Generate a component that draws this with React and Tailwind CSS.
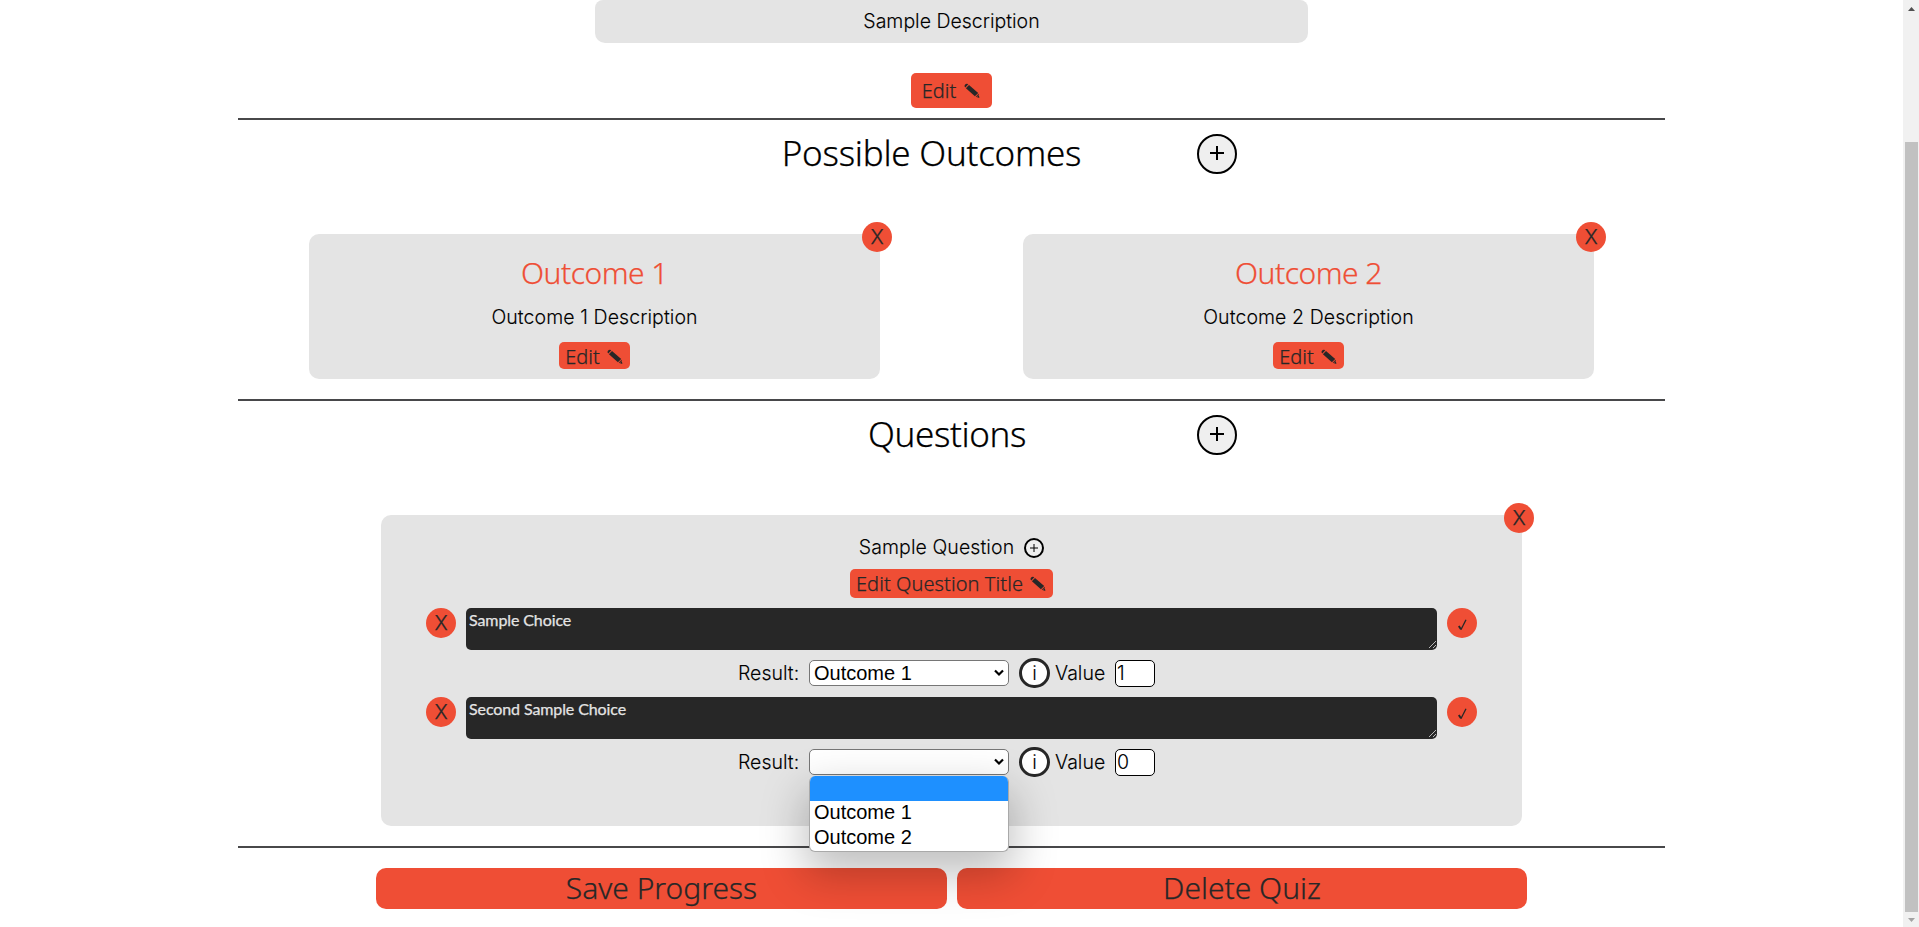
const SANS = "font-['Noto_Sans','Open_Sans',sans-serif] font-light [-webkit-text-stroke:0.25px]";
const BODY = "font-['Inter',sans-serif] font-light text-[19.5px] [-webkit-text-stroke:0.1px]";

function Pencil() {
  return (
    <svg width="16" height="16" viewBox="0 0 16 16" fill="#272727" className="shrink-0">
      <path d="M0.6 3.4C0.2 2 1.6 0.4 3.1 0.7L4.3 1.3L1.3 4.6Z" />
      <path d="M5 1.9L14.2 9.9L10.9 13.2L1.9 5.2Z" />
      <path d="M14.6 10.7L15.4 15L11.7 13.8Z" />
      <path d="M14.3 12.4L13 13.7" stroke="#ef4e35" strokeWidth="0.8" />
    </svg>
  );
}

function Rule() {
  return <div className="mx-auto h-0.5 w-[1427px] bg-[#48484a]" />;
}

function Round({ children, className = "" }) {
  return (
    <button className={`flex h-[30px] w-[30px] shrink-0 items-center justify-center rounded-full bg-[#ef4e35] font-['Inter',sans-serif] font-light leading-none text-[#272727] ${className}`}>
      {children}
    </button>
  );
}

function Heading({ children, box }) {
  return (
    <div className="flex h-[68px] pt-3.5">
      <h2 className={`h-10 pt-px text-center leading-9 whitespace-nowrap ${box}`}>{children}</h2>
      <button className="flex h-10 w-10 items-center justify-center rounded-full border-2 border-black bg-[#efefef]">
        <svg width="16" height="16" viewBox="0 0 16 16" className="mb-0.5">
          <path d="M8 1V15M1 8H15" stroke="black" strokeWidth="2" />
        </svg>
      </button>
    </div>
  );
}

function Outcome({ n }) {
  return (
    <div className="relative flex h-[145px] w-[571px] flex-col items-center rounded-[10px] bg-[#e4e4e4]">
      <Round className="absolute -top-3 -right-3 text-[20px]">X</Round>
      <h3 className="mt-[21px] h-9 text-[30px] leading-9 tracking-[-0.5px] text-[#ef4e35]">Outcome {n}</h3>
      <p className={`mt-3 h-[28px] leading-7 tracking-[0.08px] ${BODY}`}>Outcome {n} Description</p>
      <button className="mt-[11px] flex h-[27px] w-[71px] items-center justify-center gap-[7px] rounded-[5px] bg-[#ef4e35] pt-0.5 pr-px text-[20px] leading-6 text-[#272727]">
        Edit <Pencil />
      </button>
    </div>
  );
}

function Choice({ text, result, value, open }) {
  return (
    <div className="h-[89px]">
      <div className="flex justify-center gap-2.5">
        <Round className="text-[20px]">X</Round>
        <div className="flex h-[42px] w-[971px] items-end justify-between rounded-[5px] bg-[#272727]">
          <span className="self-start pt-[3px] pl-[3px] font-['Lato',sans-serif] text-[16px] leading-[18px] font-normal tracking-[-0.1px] text-[#e4e4e4]">{text}</span>
          <svg width="9" height="9" viewBox="0 0 9 9" className="mb-px">
            <path d="M1 8L8 1M5 8L8 5" stroke="#c8c8c8" strokeWidth="0.9" />
          </svg>
        </div>
        <Round>
          <svg width="9" height="12" viewBox="0 0 9 12" fill="none" stroke="#272727" className="mt-[3px]">
            <path d="M0.8 7L2.9 10.3" strokeWidth="1.9" />
            <path d="M2.9 10.8L8 0.8" strokeWidth="1.3" />
          </svg>
        </Round>
      </div>
      <div className={`mt-2 flex h-[30px] items-center pl-[357px] leading-7 ${BODY}`}>
        <span className="w-[71px]">Result:</span>
        <div className="relative flex h-[26px] w-[200px] items-center justify-between rounded-[5px] border border-[#767676] bg-white pr-1 pl-1 font-['Liberation_Sans',sans-serif] text-[20px] font-normal [-webkit-text-stroke:0px]">
          <span className="leading-6">{result}</span>
          <svg width="10" height="8" viewBox="0 0 10 8" fill="none" className="ml-auto">
            <path d="M1 1.5L5 5.5L9 1.5" stroke="black" strokeWidth="2.2" />
          </svg>
          {open && (
            <div className="absolute top-[26px] -left-px z-10 flex h-[76px] w-[200px] flex-col overflow-hidden rounded-[6px] border border-t-0 border-[#a9a9a9] bg-white shadow-[0_18px_44px_4px_rgba(0,0,0,0.25)]">
              <div className="h-[25px] bg-[#1e90ff]" />
              <div className="h-[25px] pl-1 leading-[22px]">Outcome 1</div>
              <div className="h-[25px] pl-1 leading-[22px]">Outcome 2</div>
            </div>
          )}
        </div>
        <span className="ml-2.5 flex h-[30px] w-[31px] items-center justify-center rounded-full border-3 border-[#272727] bg-white leading-6">i</span>
        <span className="ml-[5px] w-[60px]">Value</span>
        <span className="flex h-[27px] w-10 items-center rounded-[5px] border border-black bg-white pl-px leading-6">{value}</span>
      </div>
    </div>
  );
}

export default function App() {
  return (
    <div className={`flex h-[927px] w-[1919px] overflow-hidden bg-white text-black ${SANS}`}>
      <main className="w-[1903px]">
        <div className={`mx-auto flex h-[43px] w-[713px] justify-center rounded-[10px] rounded-t-[8px] bg-[#e4e4e4] pt-[7px] leading-7 ${BODY}`}>Sample Description</div>
        <button className="mx-auto mt-[30px] mb-2.5 flex h-[35px] w-[81px] items-center justify-center gap-2 rounded-[5px] bg-[#ef4e35] pr-px text-[20px] text-[#272727]">
          Edit <Pencil />
        </button>
        <Rule />
        <Heading box="ml-[781px] mr-[115px] w-[301px] text-[35px] tracking-[-0.25px]">Possible Outcomes</Heading>
        <section className="mt-[46px] flex gap-[143px] pl-[309px]">
          <Outcome n={1} />
          <Outcome n={2} />
        </section>
        <div className="h-5" />
        <Rule />
        <Heading box="ml-[867px] mr-[170px] w-[160px] text-[35px] tracking-[-0.4px]">Questions</Heading>
        <section className="relative mx-auto mt-[46px] h-[311px] w-[1141px] rounded-[10px] bg-[#e4e4e4] pt-[18px]">
          <Round className="absolute -top-3 -right-3 text-[20px]">X</Round>
          <div className={`flex h-7 items-center justify-center gap-[10px] leading-7 tracking-[0.08px] ${BODY}`}>
            Sample Question
            <span className="mt-0.5 flex h-5 w-5 items-center justify-center rounded-full border-2 border-black bg-[#efefef]">
              <svg width="8" height="8" viewBox="0 0 8 8">
                <path d="M4 0V8M0 4H8" stroke="black" strokeWidth="1" />
              </svg>
            </span>
          </div>
          <button className="mx-auto mt-2 mb-2.5 flex h-[29px] w-[203px] items-center justify-center gap-[7px] rounded-[5px] bg-[#ef4e35] pr-px text-[20px] leading-7 tracking-[0.08px] text-[#272727]">
            Edit Question Title <Pencil />
          </button>
          <Choice text="Sample Choice" result="Outcome 1" value="1" />
          <Choice text="Second Sample Choice" value="0" open />
        </section>
        <div className="h-5" />
        <Rule />
        <div className="mt-5 flex justify-center gap-2.5 text-[30px] leading-[39px] text-[#272727]">
          <button className="h-[41px] w-[571px] rounded-[10px] bg-[#ef4e35] pb-0.5">Save Progress</button>
          <button className="h-[41px] w-[570px] rounded-[10px] bg-[#ef4e35] pb-0.5">Delete Quiz</button>
        </div>
      </main>
      <aside className="flex w-4 flex-col items-center justify-between bg-[#f1f1f1]">
        <svg width="16" height="17" viewBox="0 0 16 17">
          <path d="M5 11L8.5 7L12 11Z" fill="#505050" />
        </svg>
        <div className="mt-[125px] h-[770px] w-[13px] bg-[#c1c1c1]" />
        <svg width="16" height="15" viewBox="0 0 16 15">
          <path d="M5 6L8.5 10L12 6Z" fill="#a3a3a3" />
        </svg>
      </aside>
    </div>
  );
}
